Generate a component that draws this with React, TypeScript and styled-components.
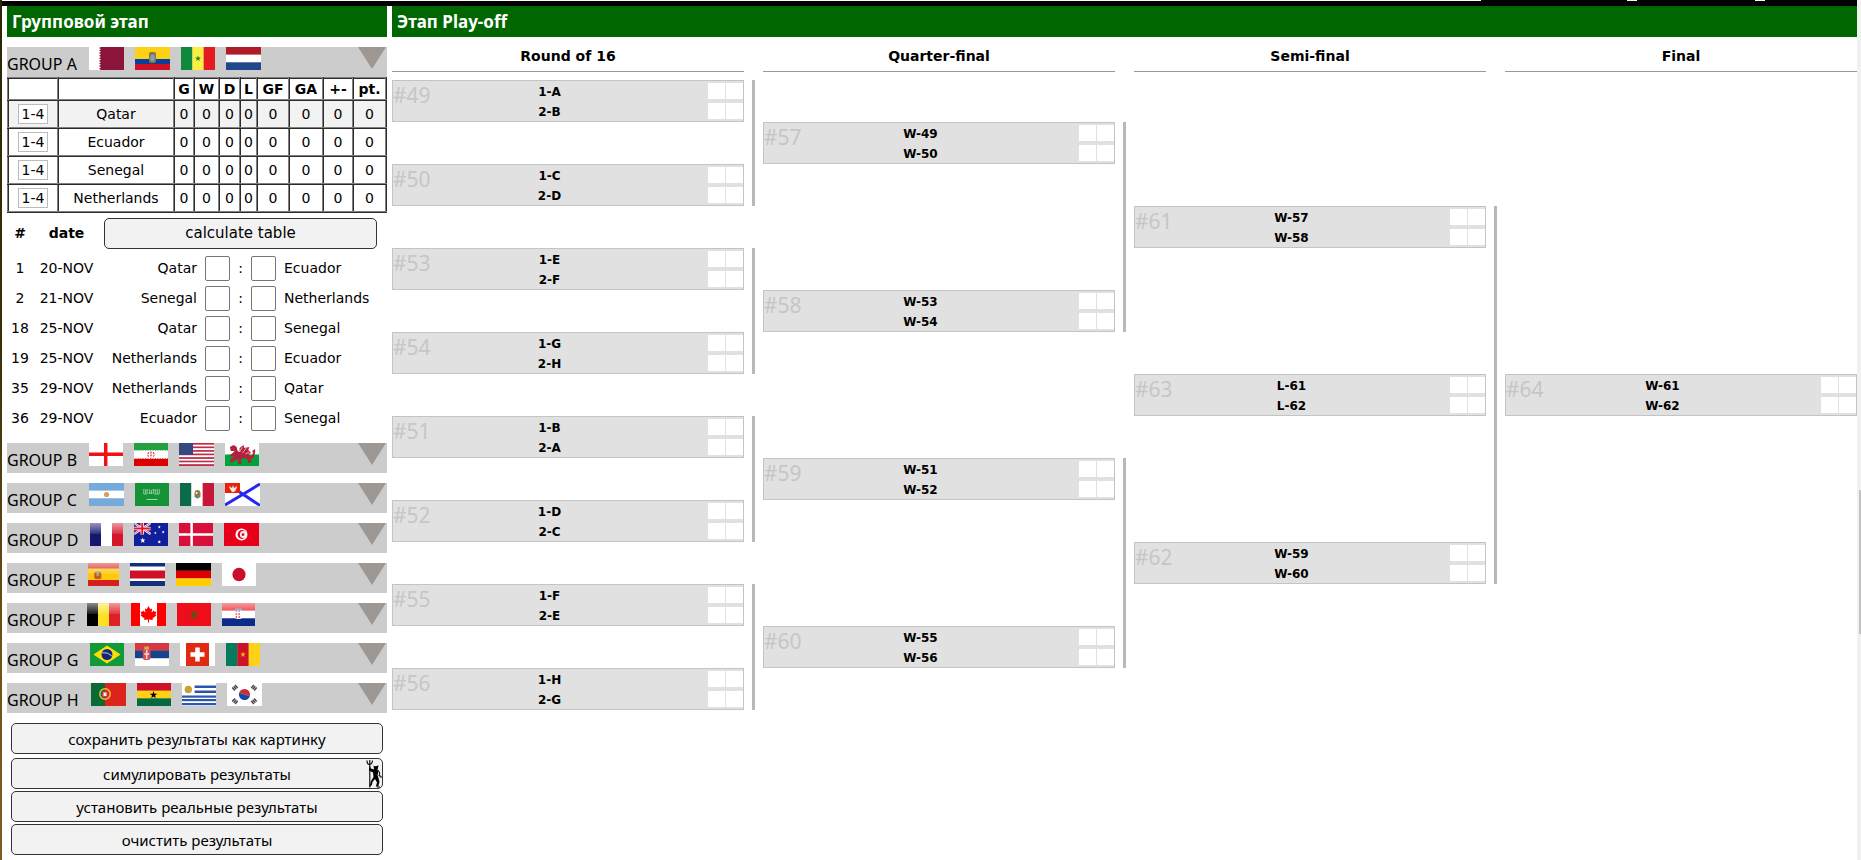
import React from "react";
import styled, { createGlobalStyle } from "styled-components";

const GlobalStyle = createGlobalStyle`
  *, *::before, *::after { box-sizing: border-box; }
  html { background: #fff; }
  body {
    margin: 0;
    color: #000;
    font-family: "DejaVu Sans", Verdana, sans-serif;
    font-size: 14px;
  }
  input, button { font: inherit; color: inherit; }
`;

const humanist = `"Noto Sans", "Open Sans", sans-serif`;

/* ---------- page frame ---------- */

const Page = styled.div`
  display: grid;
  grid-template-columns: 2px minmax(0, 1fr) 4px;
  min-height: 100vh;
`;

const WoodEdge = styled.div`
  background: linear-gradient(#2a2606, #3a3008 40%, #6e5216 75%, #7c5f20);
`;

const ScrollTrack = styled.div`
  padding: 490px 0 0 2px;
  background: #f1f1f1;
`;

const ScrollThumb = styled.div`
  height: 144px;
  background: #c1c1c1;
`;

const Content = styled.div`
  min-width: 0;
`;

const TopBar = styled.div`
  display: flex;
  height: 6px;
  background: #000;
`;

const TopPiece = styled.span<{ $grow?: number; $width?: number; $light?: boolean }>`
  flex: ${(p) => (p.$grow ? `${p.$grow} 1 0` : `0 0 ${p.$width}px`)};
  height: 1px;
  background: ${(p) => (p.$light ? "#fff" : "#000")};
`;

const Columns = styled.main`
  display: grid;
  grid-template-columns: 380px minmax(0, 1fr);
  column-gap: 5px;
  padding-left: 5px;
`;

const Heading = styled.h2`
  margin: 0;
  padding: 0 5px;
  height: 31px;
  background: #060;
  color: #fff;
  font: bold 17px/31px ${humanist};
`;

/* ---------- group stage ---------- */

const GroupList = styled.div`
  display: flex;
  flex-direction: column;
  gap: 10px;
  padding-top: 10px;
`;

const GroupBar = styled.button`
  display: flex;
  align-items: flex-start;
  width: 100%;
  height: 30px;
  padding: 0;
  border: 0;
  background: #ccc;
  text-align: left;
  cursor: pointer;
`;

const GroupName = styled.span`
  margin-right: 12px;
  padding-top: 5px;
  font: 16px/24px ${humanist};
  white-space: nowrap;
`;

const Flags = styled.span`
  display: flex;
  flex: 1;
  gap: 11px;
`;

const FlagSvg = styled.svg`
  display: block;
  height: 23px;
`;

const Arrow = styled.svg`
  display: block;
  width: 29px;
  height: 22px;
`;

const Standings = styled.table`
  width: 100%;
  border-collapse: collapse;
  table-layout: fixed;
  border: 2px ridge #808080;
  text-align: center;

  th, td {
    height: 28px;
    padding: 0;
    border: 2px ridge #808080;
  }
  th { height: 22px; line-height: 18px; }
`;

const StandingRow = styled.tr<{ $shaded: boolean }>`
  background: ${(p) => (p.$shaded ? "#f2f2f2" : "#fff")};
`;

const Place = styled.input`
  display: block;
  width: 30px;
  height: 20px;
  margin: 0 auto;
  padding: 0;
  border: 1px solid #bbb;
  background: #fff;
  text-align: center;
`;

const Fixtures = styled.table`
  width: 370px;
  margin-top: 3px;
  border-collapse: collapse;
  table-layout: fixed;

  th, td { height: 30px; padding: 0; text-align: center; }
  th { height: 37px; padding-bottom: 3px; }
`;

const Team = styled.td<{ $side: "left" | "right" }>`
  && {
    text-align: ${(p) => (p.$side === "left" ? "right" : "left")};
    padding: ${(p) => (p.$side === "left" ? "0 8px 0 0" : "0 0 0 8px")};
  }
`;

const Goal = styled.input`
  display: block;
  width: 25px;
  height: 25px;
  padding: 0;
  border: 1px solid #767676;
  border-radius: 2px;
  background: #fff;
  text-align: center;
`;

const Action = styled.button<{ $family?: string }>`
  position: relative;
  display: block;
  width: 100%;
  height: 31px;
  padding: 0;
  border: 1px solid #333;
  border-radius: 5px;
  background: #f2f2f2;
  font-family: ${(p) => p.$family ?? "inherit"};
  font-size: 15px;
  font-weight: normal;
  cursor: pointer;
`;

const CalcCell = styled.div`
  padding-left: 4px;
`;

const Actions = styled.div`
  display: flex;
  flex-direction: column;
  gap: 2px;
  padding: 10px 4px 5px;

  & > :first-child { margin-bottom: 2px; }
`;

const Imp = styled.svg`
  position: absolute;
  top: 0;
  right: 0;
  width: 16px;
  height: 29px;
`;

/* ---------- play-off ---------- */

const Bracket = styled.div`
  display: grid;
  grid-template-columns: minmax(0, 1fr) repeat(3, 19px minmax(0, 1fr));
  grid-template-rows: 43px repeat(15, 42px);
`;

const RoundName = styled.h3<{ $col: number }>`
  grid-column: ${(p) => p.$col};
  grid-row: 1;
  height: 35px;
  margin: 0;
  border-bottom: 1px solid #999;
  font-size: 14px;
  line-height: 38px;
  text-align: center;
`;

const Game = styled.article<{ $col: number; $row: number }>`
  grid-column: ${(p) => p.$col};
  grid-row: ${(p) => p.$row + 1};
  display: grid;
  grid-template-columns: 40px minmax(0, 1fr) 35px;
  border: 1px solid #c4c4c4;
  background: #e1e1e1;
`;

const GameNumber = styled.span`
  color: #c6c6c6;
  font: 21px/28px ${humanist};
`;

const Sides = styled.div`
  padding: 1px 42px 0 0;
  font-size: 12px;
  font-weight: bold;
  line-height: 20px;
  text-align: center;
`;

const Scores = styled.div`
  display: grid;
  grid-template-columns: 17px 17px;
  grid-auto-rows: 16px;
  gap: 4px 1px;
  padding-top: 2px;
`;

const Score = styled.input`
  width: 17px;
  height: 16px;
  padding: 0;
  border: 0;
  background: #fff;
  font-size: 12px;
  text-align: center;
`;

const Link = styled.span<{ $col: number; $from: number; $to: number }>`
  grid-column: ${(p) => p.$col};
  grid-row: ${(p) => p.$from + 1} / ${(p) => p.$to + 2};
  width: 3px;
  margin-left: 8px;
  background: #b8b8b8;
`;

/* ---------- flags ---------- */

const H = ({ c }: { c: string[] }) => (
  <>{c.map((f, i) => <rect key={i} y={(23 / c.length) * i} width="35" height={23 / c.length + 0.2} fill={f} />)}</>
);
const V = ({ c }: { c: string[] }) => (
  <>{c.map((f, i) => <rect key={i} x={(35 / c.length) * i} width={35 / c.length + 0.2} height="23" fill={f} />)}</>
);
const starPoints = (cx: number, cy: number, r: number) =>
  Array.from({ length: 10 }, (_, i) => {
    const a = (Math.PI / 5) * i - Math.PI / 2;
    const q = i % 2 ? r * 0.4 : r;
    return `${cx + q * Math.cos(a)},${cy + q * Math.sin(a)}`;
  }).join(" ");
const Star = ({ x, y, r, fill }: { x: number; y: number; r: number; fill: string }) => (
  <polygon points={starPoints(x, y, r)} fill={fill} />
);
const Gloss = () => <rect width="35" height="11" fill="url(#gloss)" />;

const flags: Record<string, React.ReactNode> = {
  Qatar: (<><rect width="35" height="23" fill="#fff" /><path d="M12 0H35V23H12l-2-1.3 2-1.3-2-1.3 2-1.3-2-1.3 2-1.3-2-1.3 2-1.3-2-1.3 2-1.3-2-1.3 2-1.3-2-1.3 2-1.3-2-1.3 2-1.3-2-1.3z" fill="#8a1538" /></>),
  Ecuador: (<><rect width="35" height="12" fill="#fcd116" /><rect y="12" width="35" height="6" fill="#0b3f9c" /><rect y="17" width="35" height="6" fill="#ce1126" /><rect x="14" y="5" width="7" height="11" rx="2" fill="#8a7445" /><ellipse cx="17.5" cy="11" rx="2.3" ry="3.4" fill="#7da4b8" /></>),
  Senegal: (<><V c={["#11883c", "#fdef42", "#e31b23"]} /><Star x={17.5} y={11.5} r={3.2} fill="#11883c" /></>),
  Netherlands: <H c={["#ae1c28", "#fff", "#21468b"]} />,
  England: (<><rect width="35" height="23" fill="#fff" /><path d="M0 11.2H35M17.2 0V23" stroke="#f01018" strokeWidth="3.6" /></>),
  Iran: (<><H c={["#239f40", "#fff", "#da0000"]} /><path d="M0 7.5H35M0 15.5H35" stroke="#fff" strokeWidth=".8" strokeDasharray="1.5 1" /><path d="M17.5 8.500v6M15.300 9.200q-2 2.300 0 4.800M19.700 9.200q2 2.300 0 4.800" fill="none" stroke="#da0000" strokeDasharray="2 .8" /></>),
  USA: (<>{Array.from({ length: 13 }, (_, i) => <rect key={i} y={i * 1.77} width="35" height="1.8" fill={i % 2 ? "#fff" : "#c22a45"} />)}<rect width="14" height="12" fill="#34497f" /></>),
  Wales: (<><rect width="35" height="12" fill="#fff" /><rect y="11.500" width="35" height="11.500" fill="#00a33b" /><path d="M5 4l4-2 3 2 1 4 2 1 0-4 4-3 1 3 5-1-1 3 3 3-3 1 3 2 2-3-1-2 3-2 0 3-1 5-4 3 2 2-4 1-1-4-4-1-3 2 1 4-4 0 1-3-1-2-4 2-2 2-2-2 2-3 3-1-3-1-2 1 0-2 3-2 2-2-4 0z" fill="#b5203a" /><path d="M15 9l3-5M18 10l4-5M21 11l4-2" stroke="#fff" strokeWidth=".6" /></>),
  Argentina: (<><H c={["#75aadb", "#fff", "#75aadb"]} /><circle cx="17.500" cy="11.500" r="2.600" fill="#d9a05c" /></>),
  Saudi: (<><rect width="35" height="23" fill="#149436" /><path d="M9 6v5M11 7v4M12.500 6v5M15 6v5M17 7v4M19 6v5M21 7v4M23 6v5M25 6v5M9 11h3M14 10h4M20 11h5M10 7h2M18 7h4" stroke="#a4d8b2" strokeWidth=".8" /><path d="M12 16.500h11" stroke="#a4d8b2" /></>),
  Mexico: (<><V c={["#0b6a4b", "#fff", "#c8163a"]} /><ellipse cx="18" cy="11" rx="3.200" ry="4" fill="#8b7d4c" /><path d="M15 13q3 4 6 0" stroke="#4d8f5a" fill="none" /><circle cx="17" cy="10" r="1" fill="#fff" /></>),
  Poland: (<><rect width="35" height="23" fill="#fff" /><path d="M0 22L35 1M10 6L35 22.500" stroke="#2727f2" strokeWidth="3" /><rect width="15" height="10" fill="#e8200c" /><path d="M4 3l3 2 1-3 1 3 3-2-1 4-2 2H7L5 6z" fill="#f3e7d8" /></>),
  France: (<><V c={["#14186e", "#fff", "#d6152d"]} /><Gloss /></>),
  Australia: (<><rect width="35" height="23" fill="#10209a" /><path d="M0 0L17 11M17 0L0 11" stroke="#fff" strokeWidth="2.200" /><path d="M0 0L17 11M17 0L0 11" stroke="#e23" strokeWidth=".8" /><path d="M8.500 0V11.500M0 5.500H17" stroke="#fff" strokeWidth="3.600" /><path d="M8.500 0V11.500M0 5.500H17" stroke="#e8112d" strokeWidth="2" /><Star x={9} y={17.500} r={3} fill="#fff" /><Star x={26} y={4} r={1.700} fill="#fff" /><Star x={22} y={10} r={1.500} fill="#fff" /><Star x={30} y={9} r={1.700} fill="#fff" /><Star x={26} y={19} r={2} fill="#fff" /></>),
  Denmark: (<><rect width="35" height="23" fill="#d8113c" /><path d="M0 11.500H35M13 0V23" stroke="#fff" strokeWidth="2.600" /></>),
  Tunisia: (<><rect width="35" height="23" fill="#e8001a" /><circle cx="17.500" cy="11.500" r="6" fill="#fff" /><circle cx="18" cy="11.500" r="4.400" fill="#e8001a" /><circle cx="19.400" cy="11.500" r="3.500" fill="#fff" /><Star x={19} y={11.500} r={2.500} fill="#e8001a" /></>),
  Spain: (<><rect width="35" height="6" fill="#d51f1f" /><rect y="5.500" width="35" height="12" fill="#fcc90c" /><rect y="17" width="35" height="6" fill="#d51f1f" /><rect x="7" y="9" width="8" height="7" rx="1.500" fill="#c35a2c" /><rect x="9.500" y="8" width="3" height="5" fill="#a9a56b" /><Gloss /></>),
  CostaRica: (<><rect width="35" height="23" fill="#fff" /><rect width="35" height="3.500" fill="#12307c" /><rect y="7.500" width="35" height="8" fill="#ce1126" /><rect y="18" width="35" height="5" fill="#12307c" /></>),
  Germany: <H c={["#000", "#d00", "#ffce00"]} />,
  Japan: (<><rect width="35" height="23" fill="#fff" /><circle cx="17.500" cy="11.500" r="6.800" fill="#c8102e" /></>),
  Belgium: (<><V c={["#000", "#fbe122", "#df2027"]} /><Gloss /></>),
  Canada: (<><rect width="35" height="23" fill="#fff" /><rect width="9" height="23" fill="#f00" /><rect x="26" width="9" height="23" fill="#f00" /><path d="M17.500 3l1.800 3.200 1.800-.8-.5 4 2.200-2 .6 1.400 2-.2-.9 3 .9.900-3.900 3 .4 1.500-3.900-.5v2.900h-1v-2.900l-3.900.5.400-1.500-3.900-3 .9-.9-.9-3 2 .2.600-1.400 2.200 2-.5-4 1.800.8z" fill="#f00" /></>),
  Morocco: (<><rect width="35" height="23" fill="#ee0d1a" /><Star x={17.500} y={11.800} r={5} fill="#4c5a18" /></>),
  Croatia: (<><H c={["#e8202a", "#fff", "#0c2a8a"]} /><rect x="14" y="6" width="7" height="10" rx="2" fill="#fff" /><path d="M14.500 8h6M14.500 11h6M14.500 14h6" stroke="#d33" strokeWidth="1.600" strokeDasharray="1.500 1.500" /><rect x="14" y="5.500" width="7" height="2" fill="#6d8fc4" /><Gloss /></>),
  Brazil: (<><rect width="35" height="23" fill="#109a3a" /><path d="M17.500 2.500L31.500 11.500 17.500 20.500 3.500 11.500z" fill="#fddc0c" /><circle cx="17.500" cy="11.500" r="5.600" fill="#14267a" /><path d="M12.500 9.800q6-1 10 3.200" stroke="#d8e4f0" fill="none" strokeWidth=".9" /></>),
  Serbia: (<><H c={["#d6383f", "#15448c", "#fff"]} /><rect x="8" y="6" width="8" height="11" rx="2.500" fill="#d34c50" /><path d="M12 7v9M9.500 11h5" stroke="#f4d9da" strokeWidth="1.500" /><rect x="9.500" y="3.500" width="5" height="3" fill="#d6ac4a" /></>),
  Switzerland: (<><rect width="35" height="23" fill="#fff" /><rect x="6" width="23" height="23" fill="#e02a12" /><path d="M17.500 4.500v14M10.500 11.500h14" stroke="#fff" strokeWidth="4.500" /></>),
  Cameroon: (<><V c={["#067a5e", "#ce1126", "#fcd116"]} /><Star x={17.500} y={11.500} r={3} fill="#fcb316" /></>),
  Portugal: (<><rect width="35" height="23" fill="#dc241c" /><rect width="14" height="23" fill="#0b6a34" /><circle cx="14" cy="11" r="5.200" fill="none" stroke="#e2c33a" strokeWidth="1.500" /><rect x="11" y="8" width="6" height="6.500" rx="1.500" fill="#d33" /><rect x="12.500" y="9.500" width="3" height="3.500" fill="#eef" /></>),
  Ghana: (<><H c={["#ce1126", "#fcd116", "#056b3f"]} /><Star x={17} y={12} r={4} fill="#000" /></>),
  Uruguay: (<><rect width="35" height="23" fill="#fff" />{[2.5, 7.5].map((y) => <rect key={y} x="13" y={y} width="22" height="2.500" fill="#2c55b0" />)}{[12.5, 16, 20].map((y) => <rect key={y} y={y} width="35" height="2.200" fill="#2c55b0" />)}<circle cx="6.500" cy="6.500" r="3.800" fill="#c6a234" /></>),
  Korea: (<><rect width="35" height="23" fill="#fff" /><path d="M11.900 11.500a5.600 5.600 0 0 1 11.200 0z" fill="#cd2e3a" transform="rotate(18 17.500 11.500)" /><path d="M11.900 11.500a5.600 5.600 0 0 0 11.200 0z" fill="#0f4aa0" transform="rotate(18 17.500 11.500)" /><path d="M6 6.500l4-3.500M25 3l4 3.500M6 16.500l4 3.500M25 20l4-3.500" stroke="#444" strokeWidth="4" strokeDasharray="1.400 .5" /></>),
};

/* ---------- data ---------- */

// every flag image keeps its own width
const groups: { id: string; teams: [string, number][] }[] = [
  { id: "A", teams: [["Qatar", 35], ["Ecuador", 35], ["Senegal", 34], ["Netherlands", 35]] },
  { id: "B", teams: [["England", 34], ["Iran", 34], ["USA", 35], ["Wales", 34]] },
  { id: "C", teams: [["Argentina", 35], ["Saudi", 34], ["Mexico", 34], ["Poland", 35]] },
  { id: "D", teams: [["France", 33], ["Australia", 34], ["Denmark", 34], ["Tunisia", 35]] },
  { id: "E", teams: [["Spain", 31], ["CostaRica", 35], ["Germany", 35], ["Japan", 34]] },
  { id: "F", teams: [["Belgium", 33], ["Canada", 35], ["Morocco", 34], ["Croatia", 33]] },
  { id: "G", teams: [["Brazil", 34], ["Serbia", 34], ["Switzerland", 35], ["Cameroon", 34]] },
  { id: "H", teams: [["Portugal", 35], ["Ghana", 34], ["Uruguay", 34], ["Korea", 35]] },
];

const statColumns: [string, number][] = [
  ["G", 20], ["W", 25], ["D", 21], ["L", 17], ["GF", 32], ["GA", 34], ["+-", 30], ["pt.", 33],
];

const fixtures: [number, string, string, string][] = [
  [1, "20-NOV", "Qatar", "Ecuador"],
  [2, "21-NOV", "Senegal", "Netherlands"],
  [18, "25-NOV", "Qatar", "Senegal"],
  [19, "25-NOV", "Netherlands", "Ecuador"],
  [35, "29-NOV", "Netherlands", "Qatar"],
  [36, "29-NOV", "Ecuador", "Senegal"],
];

const rounds = ["Round of 16", "Quarter-final", "Semi-final", "Final"];

// id, round, bracket row, first side, second side
const games: [number, number, number, string, string][] = [
  [49, 0, 1, "1-A", "2-B"],
  [50, 0, 3, "1-C", "2-D"],
  [53, 0, 5, "1-E", "2-F"],
  [54, 0, 7, "1-G", "2-H"],
  [51, 0, 9, "1-B", "2-A"],
  [52, 0, 11, "1-D", "2-C"],
  [55, 0, 13, "1-F", "2-E"],
  [56, 0, 15, "1-H", "2-G"],
  [57, 1, 2, "W-49", "W-50"],
  [58, 1, 6, "W-53", "W-54"],
  [59, 1, 10, "W-51", "W-52"],
  [60, 1, 14, "W-55", "W-56"],
  [61, 2, 4, "W-57", "W-58"],
  [63, 2, 8, "L-61", "L-62"],
  [62, 2, 12, "W-59", "W-60"],
  [64, 3, 8, "W-61", "W-62"],
];

// round, first row, last row
const links: [number, number, number][] = [
  [0, 1, 3], [0, 5, 7], [0, 9, 11], [0, 13, 15],
  [1, 2, 6], [1, 10, 14],
  [2, 4, 12],
];

/* ---------- components ---------- */

function StandingsTable({ teams }: { teams: string[] }) {
  return (
    <Standings>
      <colgroup>
        <col style={{ width: 50 }} />
        <col />
        {statColumns.map(([name, width]) => <col key={name} style={{ width }} />)}
      </colgroup>
      <thead>
        <tr>
          <th />
          <th />
          {statColumns.map(([name]) => <th key={name}>{name}</th>)}
        </tr>
      </thead>
      <tbody>
        {teams.map((team, i) => (
          <StandingRow key={team} $shaded={i === 0}>
            <td><Place aria-label={`${team} place`} defaultValue="1-4" /></td>
            <td>{team}</td>
            {statColumns.map(([name]) => <td key={name}>0</td>)}
          </StandingRow>
        ))}
      </tbody>
    </Standings>
  );
}

function FixtureTable() {
  return (
    <Fixtures>
      <colgroup>
        <col style={{ width: 26 }} />
        <col style={{ width: 67 }} />
        <col style={{ width: 105 }} />
        <col style={{ width: 25 }} />
        <col style={{ width: 21 }} />
        <col style={{ width: 25 }} />
        <col />
      </colgroup>
      <thead>
        <tr>
          <th>#</th>
          <th>date</th>
          <th colSpan={5}>
            <CalcCell><Action type="button">calculate table</Action></CalcCell>
          </th>
        </tr>
      </thead>
      <tbody>
        {fixtures.map(([id, date, home, away]) => (
          <tr key={id}>
            <td>{id}</td>
            <td>{date}</td>
            <Team $side="left">{home}</Team>
            <td><Goal aria-label={`Match ${id}, ${home} goals`} /></td>
            <td>:</td>
            <td><Goal aria-label={`Match ${id}, ${away} goals`} /></td>
            <Team $side="right">{away}</Team>
          </tr>
        ))}
      </tbody>
    </Fixtures>
  );
}

function ImpIcon() {
  return (
    <Imp viewBox="0 0 16 29" aria-hidden="true">
      <path d="M1 1.500q0 4 2.500 4T6.500 1.500M3.800 1v27.500" fill="none" stroke="#000" strokeWidth="1.100" />
      <path d="M7.500 6.500l1.500.8 2-.3 1.500-1-.5 3-.5 2 1 1.500-1 3.500 1 3 1 4-1.200 4.500H9.800l1.200-4-2-3.500-2.500 3-1 3.500-1.500-.5 1-4L7.500 18 7 13.500l-4-2V9.500l1-2.500.8 2.500 3.200 1z" fill="#000" />
      <path d="M12 11q3 3 1 6 3-1 2 2M6 24l-2 3.500M11 28h3" fill="none" stroke="#000" />
    </Imp>
  );
}

export default function App() {
  return (
    <Page>
      <GlobalStyle />
      <WoodEdge />
      <Content>
        <TopBar>
          <TopPiece $grow={1479} $light />
          <TopPiece $grow={146} />
          <TopPiece $width={10} $light />
          <TopPiece $grow={118} />
          <TopPiece $width={10} $light />
          <TopPiece $grow={92} />
        </TopBar>
        <Columns>
          <section>
            <Heading>Групповой этап</Heading>
            <GroupList>
              {groups.map(({ id, teams }, i) => (
                <div key={id}>
                  <GroupBar type="button" aria-expanded={i === 0}>
                    <GroupName>GROUP {id}</GroupName>
                    <Flags>
                      {teams.map(([team, width]) => (
                        <FlagSvg key={team} width={width} viewBox="0 0 35 23" preserveAspectRatio="none" aria-hidden="true">
                          <linearGradient id="gloss" x1="0" y1="0" x2="0" y2="1">
                            <stop offset="0" stopColor="#fff" stopOpacity=".55" />
                            <stop offset="1" stopColor="#fff" stopOpacity=".1" />
                          </linearGradient>
                          {flags[team]}
                        </FlagSvg>
                      ))}
                    </Flags>
                    <Arrow viewBox="0 0 29 22" aria-hidden="true">
                      <polygon points="0,0 28,0 14,22" fill="#9d9894" />
                    </Arrow>
                  </GroupBar>
                  {i === 0 && (
                    <>
                      <StandingsTable teams={teams.map(([team]) => team)} />
                      <FixtureTable />
                    </>
                  )}
                </div>
              ))}
            </GroupList>
            <Actions>
              <Action type="button" $family={humanist}>сохранить результаты как картинку</Action>
              <Action type="button" $family={humanist}>симулировать результаты<ImpIcon /></Action>
              <Action type="button" $family={humanist}>установить реальные результаты</Action>
              <Action type="button" $family={humanist}>очистить результаты</Action>
            </Actions>
          </section>
          <section>
            <Heading>Этап Play-off</Heading>
            <Bracket>
              {rounds.map((name, i) => <RoundName key={name} $col={i * 2 + 1}>{name}</RoundName>)}
              {games.map(([id, round, row, first, second]) => (
                <Game key={id} $col={round * 2 + 1} $row={row}>
                  <GameNumber>#{id}</GameNumber>
                  <Sides>
                    <div>{first}</div>
                    <div>{second}</div>
                  </Sides>
                  <Scores>
                    <Score aria-label={`${first} goals`} />
                    <Score aria-label={`${first} penalties`} />
                    <Score aria-label={`${second} goals`} />
                    <Score aria-label={`${second} penalties`} />
                  </Scores>
                </Game>
              ))}
              {links.map(([round, from, to]) => (
                <Link key={`${round}-${from}`} $col={round * 2 + 2} $from={from} $to={to} />
              ))}
            </Bracket>
          </section>
        </Columns>
      </Content>
      <ScrollTrack><ScrollThumb /></ScrollTrack>
    </Page>
  );
}
